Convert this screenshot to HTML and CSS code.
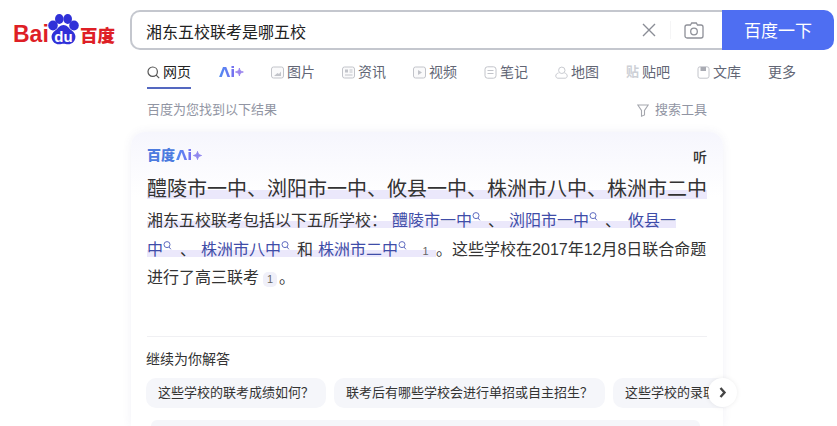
FILE: index.html
```html
<!DOCTYPE html>
<html lang="zh-CN">
<head>
<meta charset="utf-8">
<title>湘东五校联考是哪五校</title>
<link rel="stylesheet" href="styles.css">
</head>
<body>
<header class="top">
  <a class="logo">
    <span class="logo-bai">Bai</span>
    <span class="paw">
      <svg width="31" height="32" viewBox="0 0 31 32">
        <ellipse cx="5" cy="11.500" rx="4.800" ry="5" fill="#3031d8"/>
        <ellipse cx="11.300" cy="5" rx="4.300" ry="5" fill="#3031d8"/>
        <ellipse cx="19.700" cy="5" rx="4.300" ry="5" fill="#3031d8"/>
        <ellipse cx="26" cy="11.500" rx="4.800" ry="5" fill="#3031d8"/>
        <path d="M15.500 11c3.500 0 5 3 8 5.300 3 2.300 4.500 4.700 3.800 8-.8 4-4 6.200-7.300 6-1.800-.1-3-.5-4.500-.5s-2.700.4-4.500.5c-3.300.2-6.500-2-7.300-6-.7-3.300.8-5.700 3.800-8 3-2.300 4.500-5.300 8-5.300z" fill="#3031d8"/>
      </svg>
      <span class="paw-du">du</span>
    </span>
    <span class="logo-cn">百度</span>
  </a>
  <form class="search">
    <div class="box">
      <span class="query">湘东五校联考是哪五校</span>
      <svg class="clear" width="14" height="14" viewBox="0 0 14 14"><path d="M1 1l12 12M13 1L1 13" stroke="#8a8d96" stroke-width="1.400" fill="none"/></svg>
      <span class="sep"></span>
      <svg class="camera" width="20" height="17" viewBox="0 0 20 17"><path d="M6.500 3l1.200-2h4.600l1.200 2H17a2 2 0 0 1 2 2v9a2 2 0 0 1-2 2H3a2 2 0 0 1-2-2V5a2 2 0 0 1 2-2z" stroke="#8e9098" stroke-width="1.300" fill="none"/><circle cx="10" cy="9.500" r="3.300" stroke="#8e9098" stroke-width="1.300" fill="none"/></svg>
    </div>
    <button class="go" type="button">百度一下</button>
  </form>
</header>

<nav class="tabs">
  <a class="tab active">
    <svg width="13" height="13" viewBox="0 0 13 13"><circle cx="5.700" cy="5.700" r="4.700" stroke="#555" stroke-width="1.200" fill="none"/><path d="M9.200 9.200l3 3" stroke="#555" stroke-width="1.200"/></svg>网页
  </a>
  <a class="tab ai-tab"><span class="ai-word">Λi</span><svg class="spark" width="10" height="10" viewBox="0 0 10 10"><path d="M5 .5c.5 2.800 1.500 3.800 4.500 4.500-3 .7-4 1.700-4.500 4.500C4.500 6.700 3.500 5.700.5 5c3-.7 4-1.700 4.500-4.500z" fill="#9c86ee" stroke="#9c86ee"/></svg></a>
  <a class="tab">
    <svg width="13" height="13" viewBox="0 0 13 13"><rect x=".5" y="1" width="12" height="11" rx="2" fill="#fafafb" stroke="#c2c4ca"/><path d="M3 10l3.500-3 1.500 1 2-2.500V10z" fill="#c2c4ca"/></svg>图片
  </a>
  <a class="tab">
    <svg width="13" height="13" viewBox="0 0 13 13"><rect x=".5" y="1" width="12" height="11" rx="2" fill="#fafafb" stroke="#c2c4ca"/><rect x="3" y="3.500" width="3" height="3" fill="#c2c4ca"/><path d="M7.500 4h3M7.500 6h3M3 9h7.500" stroke="#c2c4ca"/></svg>资讯
  </a>
  <a class="tab">
    <svg width="13" height="13" viewBox="0 0 13 13"><rect x=".5" y="1" width="12" height="11" rx="2" fill="#fafafb" stroke="#c2c4ca"/><path d="M5 4l4 2.500L5 9z" fill="#c2c4ca"/></svg>视频
  </a>
  <a class="tab">
    <svg width="13" height="13" viewBox="0 0 13 13"><rect x="1" y=".8" width="11" height="11.400" rx="2.500" fill="none" stroke="#c2c4ca"/><path d="M3.500 4.500h6M3.500 7.500h6" stroke="#c2c4ca"/></svg>笔记
  </a>
  <a class="tab">
    <svg width="13" height="13" viewBox="0 0 13 13"><circle cx="6.800" cy="4.300" r="3.200" fill="none" stroke="#c8cad0"/><path d="M3.500 7C1.500 7.500.8 8.500.8 10c0 1.300.8 2.200 2.200 2.200h7c1.400 0 2.200-.9 2.200-2.200 0-1.500-.7-2.500-2.700-3" fill="none" stroke="#c8cad0"/></svg>地图
  </a>
  <a class="tab"><span class="tieba-mark">贴</span>贴吧</a>
  <a class="tab">
    <svg width="13" height="13" viewBox="0 0 13 13"><rect x="1" y=".8" width="11" height="11.400" rx="2" fill="none" stroke="#c2c4ca"/><path d="M3.500 1h5.500v4H3.500z" fill="#a9abb3"/></svg>文库
  </a>
  <a class="tab">更多</a>
</nav>

<div class="meta">
  <span>百度为您找到以下结果</span>
  <span class="tools"><svg width="12" height="13" viewBox="0 0 12 13"><path d="M.8 1h10.400L7.500 6.500V11L4.500 12.200V6.500z" fill="none" stroke="#a5a7ae" stroke-width="1.100"/></svg>搜索工具</span>
</div>

<main class="card">
  <div class="card-head">
    <span class="brand"><span class="brand-cn">百度</span><span class="ai-word">Λi</span><svg class="spark" width="9" height="9" viewBox="0 0 10 10"><path d="M5 .5c.5 2.800 1.500 3.800 4.500 4.500-3 .7-4 1.700-4.500 4.500C4.500 6.700 3.500 5.700.5 5c3-.7 4-1.700 4.500-4.500z" fill="#8f86ee" stroke="#8f86ee"/></svg></span>
    <span class="listen">听</span>
  </div>
  <h1 class="answer"><span class="hl">醴陵市一中、浏阳市一中、攸县一中、株洲市八中、株洲市二中</span></h1>
  <p class="para"><span class="hl">湘东五校联考包括以下五所学校：<a class="lk">醴陵市一中<svg class="q" width="9" height="9" viewBox="0 0 9 9"><circle cx="4" cy="3.600" r="3" stroke="#5f6cc0" fill="none"/><path d="M6 6l1.900 2.300" stroke="#5f6cc0"/></svg></a>、<a class="lk">浏阳市一中<svg class="q" width="9" height="9" viewBox="0 0 9 9"><circle cx="4" cy="3.600" r="3" stroke="#5f6cc0" fill="none"/><path d="M6 6l1.900 2.300" stroke="#5f6cc0"/></svg></a>、<a class="lk wrap">攸县一<br>中<svg class="q" width="9" height="9" viewBox="0 0 9 9"><circle cx="4" cy="3.600" r="3" stroke="#5f6cc0" fill="none"/><path d="M6 6l1.900 2.300" stroke="#5f6cc0"/></svg></a>、<a class="lk">株洲市八中<svg class="q" width="9" height="9" viewBox="0 0 9 9"><circle cx="4" cy="3.600" r="3" stroke="#5f6cc0" fill="none"/><path d="M6 6l1.900 2.300" stroke="#5f6cc0"/></svg></a>和<a class="lk last">株洲市二中<svg class="q" width="9" height="9" viewBox="0 0 9 9"><circle cx="4" cy="3.600" r="3" stroke="#5f6cc0" fill="none"/><path d="M6 6l1.900 2.300" stroke="#5f6cc0"/></svg></a><span class="cite wide">1</span></span>。这些学校在2017年12月8日联合命题进行了高三联考<span class="cite">1</span>。</p>
  <div class="more">
    <div class="more-title">继续为你解答</div>
    <div class="chips-wrap">
      <div class="chips">
        <span class="chip">这些学校的联考成绩如何？</span>
        <span class="chip">联考后有哪些学校会进行单招或自主招生？</span>
        <span class="chip chip-cut">这些学校的录取</span>
      </div>
      <span class="arrow"><svg width="8" height="11" viewBox="0 0 8 11"><path d="M1.500 1l4 4.500-4 4.500" stroke="#444" stroke-width="2.400" fill="none"/></svg></span>
    </div>
    <div class="ask"></div>
  </div>
</main>
</body>
</html>
```

FILE: styles.css
```css
* { box-sizing: border-box; }
html, body { margin: 0; padding: 0; }
body {
  width: 837px;
  height: 426px;
  overflow: hidden;
  background: #fff;
  color: #222;
  font-family: "Liberation Sans", "Noto Sans CJK SC", sans-serif;
}
a { color: inherit; text-decoration: none; }

.top { display: flex; align-items: flex-start; padding: 10px 3px 0 13px; }
.logo { display: flex; align-items: flex-end; width: 117px; height: 36px; color: #de1f26; }
.logo-bai { width: 35px; font-size: 23px; font-weight: 700; line-height: 24px; }
.logo-cn { font-size: 17.500px; font-weight: 900; line-height: 22px; margin-left: 1px; font-family: "Noto Sans CJK SC", sans-serif; }
.paw { position: relative; display: block; width: 31px; height: 32px; }
.paw svg { display: block; }
.paw-du { position: absolute; left: 5px; top: 14px; width: 21px; color: #fff; font-size: 15px; font-weight: 700; line-height: 17px; text-align: center; }

.search { display: flex; width: 704px; height: 40px; }
.box {
  flex: 1;
  display: flex;
  align-items: center;
  border: 2px solid #c4c7ce;
  border-right: 0;
  border-radius: 10px 0 0 10px;
  padding-left: 14px;
}
.query { flex: 1; font-size: 16px; color: #222; padding-top: 2px; }
.clear { margin-right: 14px; }
.sep { width: 1px; height: 18px; background: #f5f5f6; margin-right: 13px; }
.camera { margin-right: 18px; }
.go {
  width: 112px;
  border: 0;
  padding: 0 0 2px;
  background: #4e6ef2;
  color: #fff;
  font: 17px "Liberation Sans", "Noto Sans CJK SC", sans-serif;
  border-radius: 0 10px 10px 0;
}

.tabs { display: flex; gap: 27px; margin-top: 10px; padding-left: 147px; height: 29px; font-size: 14px; color: #626675; }
.tab { display: flex; align-items: center; gap: 3px; height: 24px; line-height: 24px; }
.tab.active { color: #222; height: 29px; align-items: flex-start; border-bottom: 2px solid #5468c0; }
.tab.active svg { margin-top: 6px; }
.ai-tab { gap: 0; width: 25px; margin-left: 1px; }
.tieba-mark { width: 13px; color: #cdd0d6; font-size: 13px; font-weight: 700; line-height: 24px; }
.ai-word {
  font-family: "DejaVu Sans", sans-serif;
  font-size: 14.500px;
  font-weight: 700;
  background: linear-gradient(90deg, #4e8af2, #7a6ff0);
  -webkit-background-clip: text;
  background-clip: text;
  color: transparent;
}

.meta { display: flex; justify-content: space-between; width: 707px; padding-left: 147px; margin-top: 11px; font-size: 13px; line-height: 20px; color: #9195a3; }
.tools { display: flex; align-items: center; gap: 6px; }

.card {
  width: 592px;
  height: 294px;
  margin: 12px 0 0 131px;
  padding: 13px 16px 0;
  border-radius: 14px 14px 0 0;
  background: linear-gradient(180deg, #f6f6fd 0, #fff 65px);
  box-shadow: 0 0 10px rgba(80, 80, 150, .08);
}
.card-head { display: flex; justify-content: space-between; align-items: center; height: 20px; }
.brand { display: flex; align-items: center; gap: 1px; }
.brand-cn { font-size: 14px; font-weight: 900; color: #4c7bdf; line-height: 20px; }
.listen { font-size: 14px; font-weight: 500; color: #333; margin-top: 1px; }

.answer { margin: 9px 0 0; font-size: 20px; font-weight: 400; line-height: 30px; color: #333; }
.hl { background: linear-gradient(180deg, transparent 55%, #ebe8fb 55%, #ebe8fb 95%, transparent 95%); }
.para { margin: 3px 0 0; font-size: 16px; line-height: 28.500px; color: #333; height: 86px; }
.lk { color: #3f4da8; margin: 0 7px 0 5px; }
.lk.wrap { margin: 0 8px 0 7px; }
.lk.last { margin-right: 5px; }
.q { vertical-align: 5px; margin-left: 0; }
.cite {
  display: inline-block;
  width: 14px;
  height: 15px;
  margin: 0 2px 0 4px;
  border-radius: 5px;
  background: #f0f0f9;
  color: #666;
  font-size: 11px;
  line-height: 15px;
  text-align: center;
}
.cite.wide { width: 24px; margin: 0; padding-left: 3px; background: none; }

.more { margin-top: 43px; border-top: 1px solid #f0f0f3; }
.more-title { margin-top: 12px; margin-left: -1px; font-size: 14px; line-height: 20px; color: #333; }
.chips-wrap { position: relative; margin: 9px -16px 0 -1px; }
.chips { display: flex; gap: 8px; overflow: hidden; }
.chip { flex: none; height: 30px; padding: 0 12px; border-radius: 10px; background: #f5f6fa; color: #333; font-size: 13px; line-height: 30px; white-space: nowrap; }
.chip-cut { flex: 0 0 110px; padding-right: 0; border-radius: 10px 0 0 10px; }
.arrow {
  position: absolute;
  right: -14px;
  top: 0;
  width: 29px;
  height: 29px;
  display: flex;
  align-items: center;
  justify-content: center;
  border-radius: 50%;
  background: #fff;
  box-shadow: 0 0 5px rgba(0, 0, 0, .08);
}
.ask { height: 6px; margin: 12px 7px 0 4px; background: #f5f6fa; border-radius: 12px 12px 0 0; }
```
